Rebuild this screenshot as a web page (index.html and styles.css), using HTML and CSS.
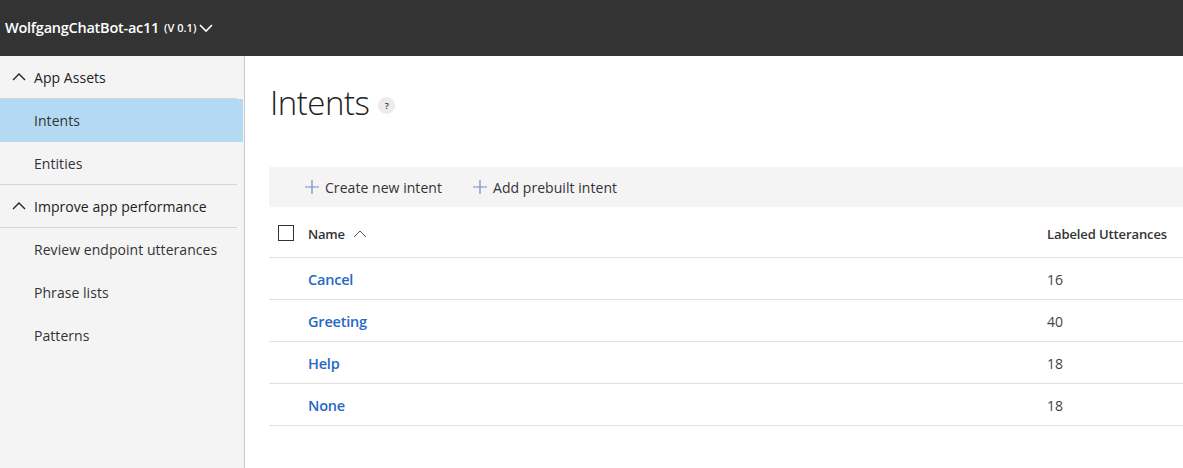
FILE: index.html
```html
<!DOCTYPE html>
<html>
<head>
<meta charset="utf-8">
<link rel="stylesheet" href="styles.css">
</head>
<body>
<header class="topbar">
  <span class="app-name">WolfgangChatBot-ac11</span>
  <span class="app-version">(V 0.1)</span>
  <svg class="top-chevron" width="14" height="10" viewBox="0 0 14 10"><path d="M1 2 L7 8 L13 2" fill="none" stroke="#fff" stroke-width="1.6"/></svg>
</header>
<div class="layout">
  <nav class="sidebar">
    <div class="nav-group">
      <svg class="group-chevron" width="14" height="10" viewBox="0 0 14 10"><path d="M1 8 L7 2 L13 8" fill="none" stroke="#222" stroke-width="1.4"/></svg>
      <span>App Assets</span>
    </div>
    <div class="nav-item selected">Intents</div>
    <div class="nav-item last">Entities</div>
    <div class="nav-group">
      <svg class="group-chevron" width="14" height="10" viewBox="0 0 14 10"><path d="M1 8 L7 2 L13 8" fill="none" stroke="#222" stroke-width="1.4"/></svg>
      <span>Improve app performance</span>
    </div>
    <div class="nav-item">Review endpoint utterances</div>
    <div class="nav-item">Phrase lists</div>
    <div class="nav-item">Patterns</div>
  </nav>
  <main class="content">
    <div class="page-title">
      <h1>Intents</h1>
      <span class="help">?</span>
    </div>
    <div class="commandbar">
      <button class="cmd"><svg class="plus" width="14" height="14" viewBox="0 0 14 14"><path d="M7 0 V14 M0 7 H14" stroke="#7487cc" stroke-width="1.2"/></svg>Create new intent</button>
      <button class="cmd"><svg class="plus" width="14" height="14" viewBox="0 0 14 14"><path d="M7 0 V14 M0 7 H14" stroke="#7487cc" stroke-width="1.2"/></svg>Add prebuilt intent</button>
    </div>
    <div class="table">
      <div class="row head">
        <div class="col-check"><span class="checkbox"></span></div>
        <div class="col-name">Name
          <svg class="sort" width="14" height="8" viewBox="0 0 14 8"><path d="M1 7 L7 1 L13 7" fill="none" stroke="#555" stroke-width="1"/></svg>
        </div>
        <div class="col-count">Labeled Utterances</div>
      </div>
      <div class="row"><div class="col-check"></div><div class="col-name link">Cancel</div><div class="col-count num">16</div></div>
      <div class="row"><div class="col-check"></div><div class="col-name link">Greeting</div><div class="col-count num">40</div></div>
      <div class="row"><div class="col-check"></div><div class="col-name link">Help</div><div class="col-count num">18</div></div>
      <div class="row"><div class="col-check"></div><div class="col-name link">None</div><div class="col-count num">18</div></div>
    </div>
  </main>
</div>
</body>
</html>
```
FILE: styles.css
```css
* { box-sizing: border-box; }
html, body { margin: 0; padding: 0; background: #fff; }
body {
  font-family: "Open Sans", "Noto Sans", sans-serif;
  color: #333;
  width: 1183px;
  height: 468px;
  overflow: hidden;
}
.topbar {
  height: 56px;
  background: #333333;
  color: #fff;
  display: flex;
  align-items: center;
  padding-left: 5px;
  padding-bottom: 2px;
}
.app-name {
  font-weight: 600;
  font-size: 14.5px;
  letter-spacing: -0.25px;
}
.app-version {
  font-weight: 600;
  font-size: 11px;
  margin-left: 5px;
  letter-spacing: 0;
}
.top-chevron { margin-left: 3px; margin-top: 1px; }
.layout {
  display: flex;
  height: 412px;
}
.sidebar {
  width: 245px;
  background: #f4f4f4;
  border-right: 1px solid #c8c8c8;
  flex-shrink: 0;
}
.nav-group, .nav-item {
  height: 43px;
  display: flex;
  align-items: center;
  font-size: 14px;
  color: #222;
  margin-right: 7px;
  letter-spacing: 0.05px;
}
.nav-group {
  border-bottom: 1px solid #d4d4d4;
  padding-left: 12px;
}
.group-chevron { margin-right: 8px; }
.nav-item { padding-left: 34px; color: #333; }
.nav-item.selected { background: #b3daf2; margin-right: 1px; }
.nav-item.last { border-bottom: 1px solid #d4d4d4; }
.content {
  flex: 1;
  padding-left: 24px;
  min-width: 0;
}
.page-title {
  display: flex;
  align-items: center;
  height: 111px;
  padding-bottom: 18px;
}
.page-title h1 {
  margin: 0 0 0 1px;
  font-size: 33px;
  font-weight: 300;
  color: #222;
  letter-spacing: -0.5px;
}
.help {
  width: 17px;
  height: 17px;
  border-radius: 50%;
  background: #ececec;
  font-size: 9px;
  font-weight: 600;
  display: flex;
  align-items: center;
  justify-content: center;
  margin-left: 9px;
  margin-top: 5px;
  color: #333;
}
.commandbar {
  height: 40px;
  background: #f4f4f4;
  display: flex;
  align-items: center;
  padding-left: 36px;
}
.cmd {
  border: 0;
  background: transparent;
  font-family: inherit;
  font-size: 14px;
  color: #333;
  display: flex;
  align-items: center;
  padding: 0;
  margin-right: 31px;
  letter-spacing: 0.05px;
}
.plus {
  margin-right: 6px;
  margin-top: -1px;
}
.table { width: 100%; }
.row {
  display: flex;
  align-items: center;
  height: 42px;
  border-bottom: 1px solid #e1e1e1;
  padding-top: 2px;
}
.row.head { height: 51px; padding-top: 3px; }
.col-check { width: 39px; padding-left: 9px; display: flex; }
.checkbox {
  width: 16px;
  height: 16px;
  border: 1px solid #333;
  display: block;
  margin-top: -2px;
}
.col-name {
  flex: 1;
  font-size: 13px;
  font-weight: 600;
  display: flex;
  align-items: center;
  letter-spacing: -0.2px;
}
.sort { margin-left: 8px; }
.col-count {
  width: 136px;
  font-size: 13px;
  font-weight: 600;
  letter-spacing: -0.1px;
}
.link {
  color: #2569c3;
  font-size: 14.5px;
  font-weight: 600;
}
.num {
  font-weight: 400;
  font-size: 14px;
  color: #444;
}
```
